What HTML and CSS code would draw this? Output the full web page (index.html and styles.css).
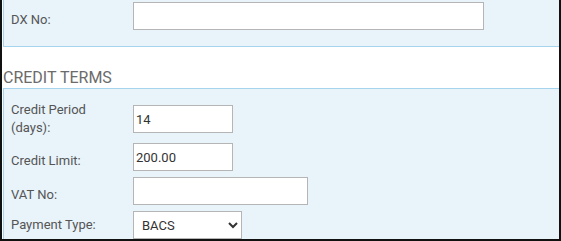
FILE: index.html
```html
<!DOCTYPE html>
<html>

<head>
    <title>Customer Details</title>
    <link rel="stylesheet" href="styles.css">
</head>

<body>
    <div class="frame">
        <div class="panel panel-top">
            <div class="row">
                <label for="dxNo" class="low">DX No:</label>
                <input type="text" id="dxNo" class="wide">
            </div>
        </div>

        <h2>Credit Terms</h2>
        <div class="panel">
            <div class="row">
                <label for="creditPeriod">Credit Period (days):</label>
                <input type="text" id="creditPeriod" class="short" value="14">
            </div>
            <div class="row">
                <label for="creditLimit" class="low">Credit Limit:</label>
                <input type="text" id="creditLimit" class="short" value="200.00">
            </div>
            <div class="row">
                <label for="vatNo" class="low">VAT No:</label>
                <input type="text" id="vatNo" class="medium">
            </div>
            <div class="row">
                <label for="paymentType">Payment Type:</label>
                <select id="paymentType">
                    <option>BACS</option>
                    <option>Cheque</option>
                    <option>Cash</option>
                </select>
            </div>
        </div>
    </div>
</body>

</html>
```

FILE: styles.css
```css
html, body {
    margin: 0;
    height: 100%;
}

body {
    font-family: Roboto, "Liberation Sans", sans-serif;
    background-color: white;
    overflow: hidden;
}

.frame {
    height: 100%;
    box-sizing: border-box;
    border: 2px solid #111;
    border-top: none;
    padding: 0 0 0 1px;
    overflow: hidden;
}

.panel {
    background-color: #e8f3fa;
    border: 1px solid #a6d4ef;
    border-right: none;
    padding: 12px 0 10px 7px;
}

.panel-top {
    border-top: none;
    padding: 2px 0 16px 7px;
}

h2 {
    margin: 0;
    padding: 25px 0 5px 0;
    height: 11px;
    line-height: 11px;
    font-size: 16px;
    font-weight: normal;
    text-transform: uppercase;
    color: #6b6b6b;
}

.row {
    display: grid;
    grid-template-columns: 122px auto;
    align-items: center;
    margin-bottom: 6px;
}

.row:last-child {
    margin-bottom: 0;
}

label {
    font-size: 13px;
    line-height: 18px;
    color: #555;
    width: 90px;
}

label.low {
    padding-top: 8px;
}

input, select {
    box-sizing: border-box;
    height: 28px;
    border: 1px solid #b5b5b5;
    border-radius: 0;
    background-color: white;
    font-family: Roboto, "Liberation Sans", sans-serif;
    font-size: 13px;
    color: #333;
    padding: 0 2px;
    margin: 0;
}

.wide {
    width: 351px;
}

.short {
    width: 100px;
}

.medium {
    width: 175px;
}

select {
    width: 109px;
    padding-left: 4px;
}
```
